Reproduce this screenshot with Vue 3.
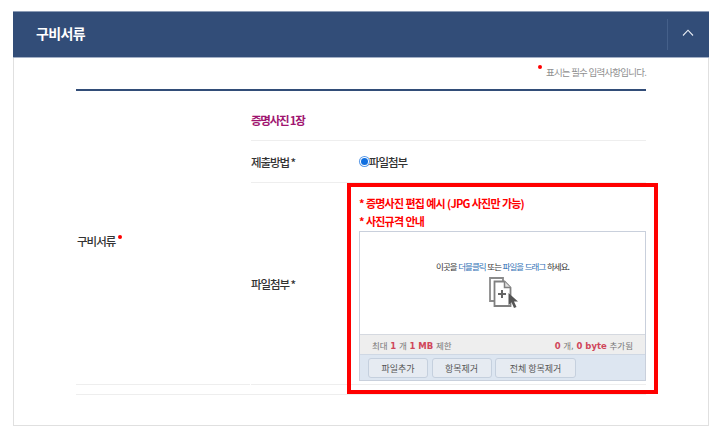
<script setup>
const buttons = [
  { label: '파일추가', w: 60 },
  { label: '항목제거', w: 60 },
  { label: '전체 항목제거', w: 81 },
]
</script>

<template>
  <div class="page">
    <section class="card">
      <header class="head">
        <h2 class="head-title">구비서류</h2>
        <div class="head-toggle">
          <svg width="12" height="7" viewBox="0 0 12 7"><path d="M1 6.5 6 1.2l5 5.3" fill="none" stroke="#e8edf4" stroke-width="1.1" /></svg>
        </div>
      </header>
      <div class="body">
        <p class="note"><i class="dot"></i>표시는 필수 입력사항입니다.</p>
        <div class="table">
          <div class="group-label">구비서류<i class="dot label-dot"></i></div>
          <div class="rows">
            <div class="row row-title">증명사진 1장</div>
            <div class="row row-method">
              <div class="label">제출방법 *</div>
              <div class="radio-wrap"><span class="radio"></span><span class="radio-text">파일첨부</span></div>
            </div>
            <div class="row row-file">
              <div class="label">파일첨부 *</div>
              <div class="file-col">
                <div class="links">
                  <p>* 증명사진 편집 예시 (JPG 사진만 가능)</p>
                  <p>* 사진규격 안내</p>
                </div>
                <div class="uploader">
                  <div class="drop">
                    <p class="drop-text">이곳을 <b>더블클릭</b> 또는 <b>파일을 드래그</b> 하세요.</p>
                    <svg class="drop-icon" width="30" height="32" viewBox="0 0 30 32">
                      <path d="M1 1h13v23H1z" fill="#fff" stroke="#8a8a8a" stroke-width="1.8" />
                      <path d="M5.500 4.500h10l6 6V29h-16z" fill="#fff" stroke="#808080" stroke-width="1.8" />
                      <path d="M15.500 4.500v6h6" fill="#e0e0e0" stroke="#808080" stroke-width="1.5" />
                      <path d="M9 17h8M13 13v8" stroke="#666" stroke-width="2" fill="none" />
                      <path d="M19.500 16v12l3-2.800 2.500 5.800 2.500-1.100-2.500-5.500h4z" fill="#555" />
                    </svg>
                  </div>
                  <div class="status">
                    <span>최대 <b>1</b> 개 <b>1 MB</b> 제한</span>
                    <span><b>0</b> 개, <b>0 byte</b> 추가됨</span>
                  </div>
                  <div class="tools">
                    <button v-for="b in buttons" :key="b.label" class="tool" type="button" :style="{ width: b.w + 'px' }">{{ b.label }}</button>
                  </div>
                </div>
              </div>
            </div>
          </div>
        </div>
        <div class="closing"></div>
      </div>
    </section>
    <div class="highlight"></div>
  </div>
</template>

<style>
html, body { margin: 0; background: #fff; }
</style>

<style scoped>
.page {
  position: relative;
  width: 720px;
  height: 435px;
  overflow: hidden;
  padding: 11px 11px 0 13px;
  box-sizing: border-box;
  font-family: "Noto Sans CJK KR", "Noto Sans", sans-serif;
  color: #333;
}
p, h2 { margin: 0; }
i { font-style: normal; display: block; }
.card { width: 696px; height: 415px; display: flex; flex-direction: column; box-sizing: border-box; }
.head {
  height: 47px;
  flex: none;
  background: #324d78;
  border-top: 1px solid #8c9cb6;
  border-bottom: 1px solid #a3b0c6;
  box-sizing: border-box;
  display: flex;
  align-items: center;
  justify-content: space-between;
  padding-left: 23px;
}
.head-title { font-size: 14px; font-weight: 700; color: #fff; letter-spacing: -0.6px; line-height: 20px; margin-bottom: 4px; }
.head-toggle {
  width: 42px;
  height: 31px;
  border-left: 1px solid #45608a;
  display: flex;
  align-items: center;
  justify-content: center;
  padding-right: 2px;
  box-sizing: border-box;
}
.head-toggle svg { margin-bottom: 4px; }
.body {
  flex: 1;
  border: 1px solid #e0e0e0;
  border-top: 0;
  box-sizing: border-box;
  padding: 0 62px 0 62px;
  display: flex;
  flex-direction: column;
}
.note {
  height: 31px;
  position: relative;
  display: flex;
  justify-content: flex-end;
  align-items: center;
  font-size: 9.5px;
  letter-spacing: -0.78px;
  color: #8f8f8f;
  padding-bottom: 3px;
  box-sizing: border-box;
}
.dot { width: 4px; height: 4px; border-radius: 50%; background: #f00; flex: none; }
.note .dot { margin: -10px 4px 0 0; }
.table { border-top: 2px solid #324d78; display: flex; }
.group-label {
  width: 174px;
  margin-right: 1px;
  flex: none;
  display: flex;
  align-items: center;
  padding-left: 1px;
  box-sizing: border-box;
  font-size: 11.500px;
  font-weight: 500;
  letter-spacing: -1px;
  color: #333;
  padding-top: 6px;
  border-bottom: 1px solid #eee;
}
.label-dot { margin: -8px 0 0 3px; }
.rows { flex: 1; }
.row { border-bottom: 1px solid #eee; box-sizing: border-box; display: flex; align-items: center; }
.row-title {
  height: 50px;
  font-size: 11.500px;
  font-weight: 700;
  letter-spacing: -1.25px;
  color: #a01570;
  padding-top: 8px;
}
.row-method { height: 42px; }
.row-file { height: 202px; }
.label { width: 108px; flex: none; font-size: 11.500px; font-weight: 500; letter-spacing: -1.1px; }
.radio-wrap { display: flex; align-items: center; }
.radio {
  width: 7px;
  height: 7px;
  border-radius: 50%;
  background: #0f6fe0;
  box-shadow: 0 0 0 1px #fff, 0 0 0 2px #5a9ae8;
  margin: 0 1px 0 2px;
}
.radio-text { font-size: 11.500px; font-weight: 500; letter-spacing: -1.1px; }
.file-col { width: 287px; align-self: flex-start; padding-top: 11px; }
.links { height: 37px; font-size: 11px; line-height: 18px; font-weight: 700; color: #f00; letter-spacing: -0.8px; word-spacing: 0.5px; white-space: nowrap; }
.uploader { border: 1px solid #c9d0dc; box-sizing: border-box; height: 150px; display: flex; flex-direction: column; }
.drop { flex: 1; display: flex; flex-direction: column; align-items: center; padding-top: 25px; box-sizing: border-box; }
.drop-text { font-size: 8.500px; letter-spacing: -0.95px; word-spacing: 0.6px; line-height: 18px; color: #333; white-space: nowrap; }
.drop-text b { font-weight: 400; color: #2f6fb5; }
.drop-icon { margin: 2px 0 0 2px; }
.status {
  height: 20px;
  flex: none;
  background: #eee;
  border-top: 1px solid #d5d9e0;
  box-sizing: border-box;
  display: flex;
  justify-content: space-between;
  align-items: center;
  padding: 0 12px 0 12px;
  font-family: "DejaVu Sans", "Noto Sans CJK KR", sans-serif;
  font-size: 8.500px;
  color: #777;
  white-space: nowrap;
}
.status b { color: #d0465a; font-weight: 700; }
.tools {
  height: 26px;
  flex: none;
  background: #dde6f1;
  border-top: 1px solid #cfd8e4;
  box-sizing: border-box;
  display: flex;
  gap: 3.5px;
  padding: 3px 8px 0;
}
.tool {
  height: 20px;
  padding: 0;
  border: 1px solid #c5d0de;
  border-radius: 3px;
  background: #e6ebf2;
  font-family: inherit;
  font-size: 9px;
  color: #555;
  white-space: nowrap;
}
.closing { margin-top: 9px; height: 1px; background: #eee; }
.highlight {
  position: absolute;
  left: 347px;
  top: 183px;
  width: 311px;
  height: 211px;
  border: 4px solid #f00;
  box-sizing: border-box;
  pointer-events: none;
}
</style>
